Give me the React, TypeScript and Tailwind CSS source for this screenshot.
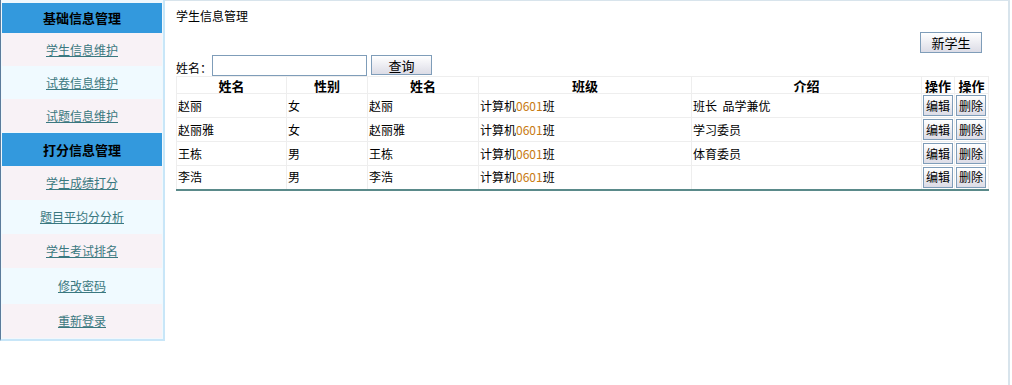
import React from "react";

const font = { fontFamily: '"Noto Sans CJK SC", "Liberation Sans", sans-serif' };

const group1 = ["学生信息维护", "试卷信息维护", "试题信息维护"];
const group2 = ["学生成绩打分", "题目平均分分析", "学生考试排名", "修改密码", "重新登录"];

const rows = [
  { name: "赵丽", sex: "女", intro: "班长  品学兼优" },
  { name: "赵丽雅", sex: "女", intro: "学习委员" },
  { name: "王栋", sex: "男", intro: "体育委员" },
  { name: "李浩", sex: "男", intro: "" },
];

function Btn({ children, className = "" }: { children: React.ReactNode; className?: string }) {
  return (
    <button
      className={`border border-[#7f9db9] bg-gradient-to-b from-white to-[#dcdce6] text-[12px] leading-none text-black ${className}`}
    >
      {children}
    </button>
  );
}

function Item({ label, i, h }: { label: string; i: number; h: string }) {
  return (
    <div
      className={`flex ${h} items-center justify-center text-[12px] text-[#3a7880] underline ${
        i % 2 === 0 ? "bg-[#f8f2f6]" : "bg-[#f0faff]"
      }`}
    >
      {label}
    </div>
  );
}

function Header({ label, h }: { label: string; h: string }) {
  return (
    <div className={`flex ${h} items-center justify-center bg-[#3399dd] text-[13px] font-bold text-black`}>
      {label}
    </div>
  );
}

export default function App() {
  return (
    <div className="flex h-[385px] w-[1012px] bg-white" style={font}>
      <div className="flex h-[341px] w-[165px] shrink-0 flex-col border-r-2 border-b-2 border-l border-[#c8e6f8] border-l-[#5b7b9b] bg-[#f0f8fd] pt-[3px] pr-[1px] pl-[1px]">
        <Header label="基础信息管理" h="h-[30px]" />
        {group1.map((g, i) => (
          <Item key={g} label={g} i={i} h="h-[33px]" />
        ))}
        <div className="h-[1px]" />
        <Header label="打分信息管理" h="h-[33px]" />
        {group2.map((g, i) => (
          <Item key={g} label={g} i={i} h={i === 3 ? "h-[36px]" : "h-[34px]"} />
        ))}
      </div>
      <div className="flex h-[385px] w-[845px] flex-col border-t border-r-2 border-[#d8e4ec] pl-[11px]">
        <div className="mt-[7px] text-[12px] leading-[16px] text-black">学生信息管理</div>
        <div className="mt-[8px] flex w-[806px] justify-end">
          <Btn className="h-[21px] w-[62px] text-[13px]">新学生</Btn>
        </div>
        <div className="mt-[2px] flex items-end">
          <span className="mb-[2px] text-[12px] leading-none">姓名：</span>
          <input className="h-[21px] w-[155px] border border-[#7f9db9] bg-white" />
          <Btn className="mb-[1px] ml-[4px] h-[20px] w-[61px] text-[13px]">查询</Btn>
        </div>
        <table className="w-[812px] table-fixed border-collapse border-r border-b-2 border-r-[#6a8a94] border-b-[#5a8a8a] text-[12px]">
          <colgroup>
            <col className="w-[110px]" />
            <col className="w-[81px]" />
            <col className="w-[111px]" />
            <col className="w-[213px]" />
            <col className="w-[230px]" />
            <col className="w-[33px]" />
            <col className="w-[34px]" />
          </colgroup>
          <thead>
            <tr className="h-[17px]">
              {["姓名", "性别", "姓名", "班级", "介绍", "操作", "操作"].map((h, i) => (
                <th
                  key={i}
                  className="border border-[#eeeeee] p-0 text-center text-[13px] leading-none font-bold"
                >
                  {h}
                </th>
              ))}
            </tr>
          </thead>
          <tbody>
            {rows.map((r, i) => (
              <tr key={i} className="h-[24px]">
                <td className="border border-[#eeeeee] px-[1px] py-0 align-middle">{r.name}</td>
                <td className="border border-[#eeeeee] px-[1px] py-0">{r.sex}</td>
                <td className="border border-[#eeeeee] px-[1px] py-0">{r.name}</td>
                <td className="border border-[#eeeeee] px-[1px] py-0">
                  计算机<span className="text-[#c87a10]">0601</span>班
                </td>
                <td className="border border-[#eeeeee] px-[1px] py-0 whitespace-pre">{r.intro}</td>
                <td className="border border-[#eeeeee] px-[1px] py-0">
                  <Btn className="h-[21px] w-[30px]">编辑</Btn>
                </td>
                <td className="border border-[#eeeeee] px-[1px] py-0">
                  <Btn className="h-[21px] w-[30px]">删除</Btn>
                </td>
              </tr>
            ))}
          </tbody>
        </table>
      </div>
    </div>
  );
}
